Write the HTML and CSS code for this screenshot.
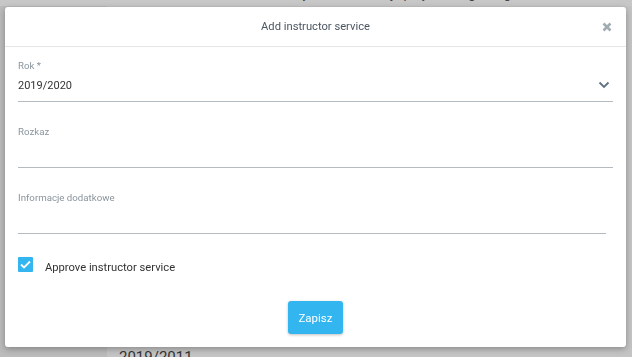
FILE: index.html
```html
<!DOCTYPE html>
<html lang="en">
<head>
  <meta charset="UTF-8" />
  <title>Add instructor service</title>
  <link rel="stylesheet" href="styles.css">
</head>
<body>
  <div class="page">
    <div class="page-top">Lista służby instruktorskiej · przydział wg kategorii</div>
    <div class="page-body">
      <div class="page-side"></div>
      <div class="page-main">
        <div class="page-row">2019/2011</div>
      </div>
    </div>
  </div>

  <div class="backdrop"></div>

  <div class="modal">
    <div class="modal-header">
      <span class="modal-title">Add instructor service</span>
      <button class="modal-close">
        <svg width="10" height="10" viewBox="0 0 10 10"><path d="M1.5 1.5 L8.5 8.5 M8.5 1.5 L1.5 8.5" stroke="#a0abb3" stroke-width="2.6"/></svg>
      </button>
    </div>

    <form class="modal-body">
      <div class="field">
        <label class="field-label">Rok *</label>
        <div class="field-input select">
          <span>2019/2020</span>
          <svg width="12" height="8" viewBox="0 0 12 8"><path d="M1.5 1.5 L6 6 L10.5 1.5" fill="none" stroke="#5f7282" stroke-width="1.8"/></svg>
        </div>
      </div>

      <div class="field">
        <label class="field-label">Rozkaz</label>
        <div class="field-input"></div>
      </div>

      <div class="field short">
        <label class="field-label">Informacje dodatkowe</label>
        <div class="field-input"></div>
      </div>

      <label class="check">
        <span class="check-box">
          <svg width="11" height="9" viewBox="0 0 11 9"><path d="M1 4.5 L4 7.5 L10 1.5" fill="none" stroke="white" stroke-width="1.8"/></svg>
        </span>
        <span class="check-text">Approve instructor service</span>
      </label>

      <div class="actions">
        <button type="button" class="save-btn">Zapisz</button>
      </div>
    </form>
  </div>
</body>
</html>
```

FILE: styles.css
```css
* {
  box-sizing: border-box;
  margin: 0;
  padding: 0;
  font-family: Roboto, 'Liberation Sans', sans-serif;
}

body {
  background-color: #fff;
  color: #333;
  overflow: hidden;
}

/* page behind the dialog */
.page {
  height: 357px;
  display: flex;
  flex-direction: column;
}

.page-top {
  height: 20px;
  padding: 0 0 0 240px;
  margin-top: -14px;
  font-size: 13px;
  color: #555;
  white-space: nowrap;
}

.page-body {
  flex: 1;
  display: flex;
}

.page-side {
  width: 107px;
  background-color: #f0f0f0;
}

.page-main {
  flex: 1;
  display: flex;
  flex-direction: column;
  justify-content: flex-end;
  background-color: #fbfbfb;
}

.page-row {
  padding-left: 12px;
  margin-bottom: -9px;
  font-size: 15px;
  color: #444;
  height: 18px;
}

.backdrop {
  position: fixed;
  inset: 0;
  background-color: rgba(0,0,0,0.22);
}

/* dialog */
.modal {
  position: absolute;
  left: 5px;
  top: 7px;
  width: 621px;
  height: 340px;
  background-color: white;
  border-radius: 3px;
  box-shadow: 0 2px 6px rgba(0,0,0,0.3);
}

.modal-header {
  height: 40px;
  display: flex;
  align-items: center;
  justify-content: center;
  position: relative;
  border-bottom: 1px solid #e4e6e8;
}

.modal-title {
  font-size: 11.2px;
  color: #4b5560;
}

.modal-close {
  position: absolute;
  right: 14px;
  top: 15px;
  border: none;
  background: none;
  display: flex;
  cursor: pointer;
}

.modal-body {
  padding: 13px 13px 0 13px;
}

.field {
  margin-bottom: 24px;
}

.field.short {
  margin-right: 7px;
  margin-bottom: 22px;
}

.field-label {
  display: block;
  font-size: 9.7px;
  color: #8a949d;
  height: 13px;
}

.field-input {
  height: 29px;
  border-bottom: 1px solid #b3bac0;
}

.select {
  display: flex;
  align-items: center;
  justify-content: space-between;
  padding-right: 3px;
  padding-bottom: 4px;
  font-size: 11px;
  color: #333;
}

.check {
  display: flex;
  align-items: center;
  height: 16px;
  font-size: 11.2px;
  color: #333;
}

.check-box {
  width: 15px;
  height: 15px;
  margin-right: 12px;
  background-color: #33b5f0;
  border-radius: 1px;
  display: flex;
  align-items: center;
  justify-content: center;
}

.check-text {
  padding-top: 6px;
}

.actions {
  display: flex;
  justify-content: center;
  margin-top: 29px;
}

.save-btn {
  background-color: #33b5f0;
  color: white;
  border: none;
  border-radius: 3px;
  width: 55px;
  height: 33px;
  font-size: 11.5px;
  box-shadow: 0 1px 3px rgba(0,0,0,0.25);
  cursor: pointer;
}
```
